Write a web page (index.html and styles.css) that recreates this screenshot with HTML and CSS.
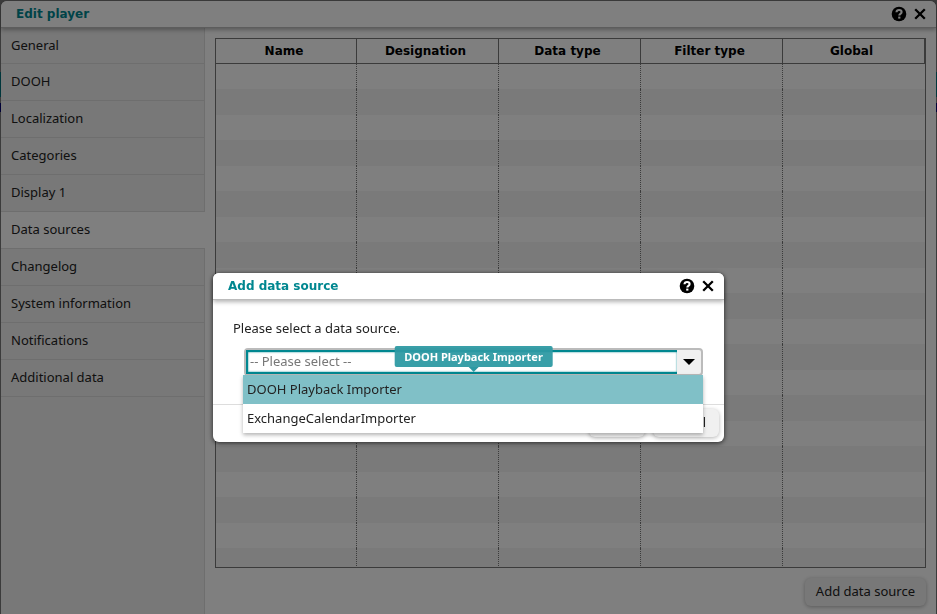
FILE: index.html
```
<!DOCTYPE html>
<html lang="en">
<head>
<meta charset="utf-8">
<title>Edit player</title>
<link rel="stylesheet" href="styles.css">
</head>
<body>
<svg class="sprite" aria-hidden="true">
  <symbol id="help" viewBox="0 0 16 16">
    <circle cx="8" cy="8" r="7.3" fill="#000"/>
    <path d="M5.500 6.300C5.600 4.700 6.600 4 8.100 4c1.500 0 2.500.8 2.500 2.100 0 1.900-2.300 1.800-2.300 3.400" fill="none" stroke="#fff" stroke-width="2.100"/>
    <rect x="7.200" y="10.600" width="2.200" height="2" fill="#fff"/>
  </symbol>
  <symbol id="close" viewBox="0 0 16 16">
    <path d="M3.200 3.200l9.600 9.600M12.800 3.200l-9.600 9.600" fill="none" stroke="#000" stroke-width="2.300"/>
  </symbol>
</svg>
<div class="window">
  <header class="titlebar">
    <h1>Edit player</h1>
    <button class="icon" aria-label="Help"><svg><use href="#help"/></svg></button>
    <button class="icon" aria-label="Close"><svg><use href="#close"/></svg></button>
  </header>
  <div class="content">
    <nav class="tabs">
      <a href="#">General</a>
      <a href="#">DOOH</a>
      <a href="#">Localization</a>
      <a href="#">Categories</a>
      <a href="#">Display 1</a>
      <a href="#" class="active">Data sources</a>
      <a href="#">Changelog</a>
      <a href="#">System information</a>
      <a href="#">Notifications</a>
      <a href="#">Additional data</a>
    </nav>
    <main class="pane">
      <div class="grid">
        <table>
          <thead><tr><th>Name</th><th>Designation</th><th>Data type</th><th>Filter type</th><th>Global</th></tr></thead>
          <tbody>
            <tr><td></td><td></td><td></td><td></td><td></td></tr>
            <tr><td></td><td></td><td></td><td></td><td></td></tr>
            <tr><td></td><td></td><td></td><td></td><td></td></tr>
            <tr><td></td><td></td><td></td><td></td><td></td></tr>
            <tr><td></td><td></td><td></td><td></td><td></td></tr>
            <tr><td></td><td></td><td></td><td></td><td></td></tr>
            <tr><td></td><td></td><td></td><td></td><td></td></tr>
            <tr><td></td><td></td><td></td><td></td><td></td></tr>
            <tr><td></td><td></td><td></td><td></td><td></td></tr>
            <tr><td></td><td></td><td></td><td></td><td></td></tr>
            <tr><td></td><td></td><td></td><td></td><td></td></tr>
            <tr><td></td><td></td><td></td><td></td><td></td></tr>
            <tr><td></td><td></td><td></td><td></td><td></td></tr>
            <tr><td></td><td></td><td></td><td></td><td></td></tr>
            <tr><td></td><td></td><td></td><td></td><td></td></tr>
            <tr><td></td><td></td><td></td><td></td><td></td></tr>
            <tr><td></td><td></td><td></td><td></td><td></td></tr>
            <tr><td></td><td></td><td></td><td></td><td></td></tr>
            <tr><td></td><td></td><td></td><td></td><td></td></tr>
            <tr><td></td><td></td><td></td><td></td><td></td></tr>
          </tbody>
        </table>
      </div>
      <div class="actions"><button class="btn">Add data source</button></div>
    </main>
  </div>
</div>
<div class="overlay">
  <section class="dialog" role="dialog" aria-labelledby="dialog-title">
    <header class="titlebar">
      <h2 id="dialog-title">Add data source</h2>
      <button class="icon" aria-label="Help"><svg><use href="#help"/></svg></button>
      <button class="icon" aria-label="Close"><svg><use href="#close"/></svg></button>
    </header>
    <div class="dialog-body">
      <label for="source">Please select a data source.</label>
      <div class="combo">
        <input id="source" type="text" placeholder="-- Please select --" role="combobox" aria-expanded="true" aria-controls="source-list">
        <button class="arrow" aria-label="Open list"><svg viewBox="0 0 12 6"><path d="M0 0h12L6 6z"/></svg></button>
        <ul class="options" id="source-list" role="listbox">
          <li role="option" aria-selected="true">DOOH Playback Importer</li>
          <li role="option" aria-selected="false">ExchangeCalendarImporter</li>
        </ul>
        <div class="tooltip" role="tooltip">DOOH Playback Importer</div>
      </div>
    </div>
    <footer class="dialog-footer">
      <button class="btn">OK</button>
      <button class="btn">Cancel</button>
    </footer>
  </section>
</div>
</body>
</html>
```
FILE: styles.css
```
* { box-sizing: border-box; }
body {
  margin: 0;
  height: 100vh;
  padding: 1px 1px 0;
  overflow: hidden;
  background: linear-gradient(#777 72px, #006c76 72px, #006c76 97px, #777 97px, #777 103px, #00006c 103px, #00006c 112px, #777 112px);
  font: 13px/20px "Noto Sans", Verdana, sans-serif;
  color: #222;
}
button, input { font: inherit; color: inherit; }
.sprite { display: none; }
.window {
  display: flex;
  flex-direction: column;
  height: 100%;
  background: #fff;
  border-radius: 6px 6px 0 0;
}
.titlebar {
  position: relative;
  display: flex;
  align-items: center;
  gap: 5px;
  height: 27px;
  padding: 0 8px 0 15px;
  background: #fff;
  border-radius: 6px 6px 0 0;
  border-bottom: 1px solid #bbb;
  box-shadow: 0 2px 4px rgba(0, 0, 0, .3);
}
.titlebar h1, .titlebar h2 {
  flex: 1;
  margin: 0;
  font: bold 12px/20px "DejaVu Sans", Verdana, sans-serif;
  color: #008790;
}
.icon { width: 16px; height: 16px; padding: 0; border: 0; background: none; }
.icon svg { display: block; width: 16px; height: 16px; }
.content { flex: 1; display: flex; min-height: 0; }
.tabs {
  width: 204px;
  flex: none;
  background: #f0f0f0;
  border-right: 1px solid #ddd;
}
.tabs a {
  display: block;
  height: 37px;
  padding: 7px 10px;
  border-bottom: 1px solid #ddd;
  color: inherit;
  text-decoration: none;
}
.tabs a:first-child { height: 36px; }
.tabs .active { margin-right: -1px; background: #fff; }
.pane { flex: 1; display: flex; flex-direction: column; min-width: 0; padding: 10px 10px 8px; }
.grid { flex: 1; min-height: 0; overflow: hidden; border: 1px solid #777; }
table { width: 100%; table-layout: fixed; border-collapse: separate; border-spacing: 0; }
th {
  height: 25px;
  padding: 0 4px 0 0;
  border-bottom: 1px solid #777;
  border-right: 1px solid #777;
  font: bold 12px/20px "DejaVu Sans", Verdana, sans-serif;
  color: #000;
}
th:first-child { width: 141px; }
td { height: 25px; padding: 0; border-right: 1px dotted #777; }
tr:nth-child(even) td { height: 26px; background: #f5f5f5; }
td:last-child { border-right: 0; }
.actions { display: flex; justify-content: flex-end; padding-top: 10px; }
.btn {
  height: 28px;
  padding: 0 11px 2px;
  border: 0;
  border-radius: 6px;
  background: #f0f0f0;
  box-shadow: 0 1px 4px rgba(0, 0, 0, .3);
}
.overlay {
  position: fixed;
  inset: 0;
  display: flex;
  justify-content: center;
  align-items: flex-start;
  padding-top: 273px;
  background: rgba(0, 0, 0, .5);
}
.dialog {
  width: 511px;
  background: #fff;
  border-radius: 6px;
  box-shadow: 0 1px 5px rgba(0, 0, 0, .7);
}
.dialog-body { padding: 18px 20px 28px; }
.dialog-body label { display: block; }
.combo {
  position: relative;
  display: flex;
  height: 28px;
  margin: 10px 1px 0 11px;
  border: 2px solid #bbb;
  border-radius: 4px;
  background: #f0f0f0;
}
.combo input {
  flex: 1;
  min-width: 0;
  padding: 0 2px 2px;
  border: 2px solid #008790;
  border-right: 0;
  background: #fff;
  box-shadow: inset 0 0 2px #008790;
  outline: 0;
}
.combo input::placeholder { color: #777; opacity: 1; }
.arrow { width: 24px; padding: 0 6px; border: 0; background: none; }
.arrow svg { display: block; width: 12px; height: 6px; }
.options {
  position: absolute;
  top: 25px;
  left: -3px;
  right: -2px;
  margin: 0;
  padding: 0;
  list-style: none;
  background: #fff;
  box-shadow: 0 2px 4px rgba(0, 0, 0, .3);
}
.options li { height: 29px; padding: 4px; }
.options [aria-selected="true"] { background: #80c0c7; }
.tooltip {
  position: absolute;
  top: -4px;
  left: 50%;
  transform: translateX(-50%);
  padding: 0 10px;
  border-radius: 2px;
  background: rgba(45, 153, 163, .94);
  color: #fff;
  font: bold 11px/21px "Noto Sans", sans-serif;
  white-space: nowrap;
}
.tooltip::after {
  content: "";
  position: absolute;
  top: 100%;
  left: 50%;
  margin-left: -5px;
  border: 5px solid transparent;
  border-top-color: #2d99a3;
  border-bottom: 0;
}
.dialog-footer {
  display: flex;
  justify-content: flex-end;
  gap: 8px;
  padding: 4px 5px 5px;
  border-top: 1px solid #ddd;
}
.dialog-footer .btn { min-width: 56px; padding: 0 13px 2px; }
```
